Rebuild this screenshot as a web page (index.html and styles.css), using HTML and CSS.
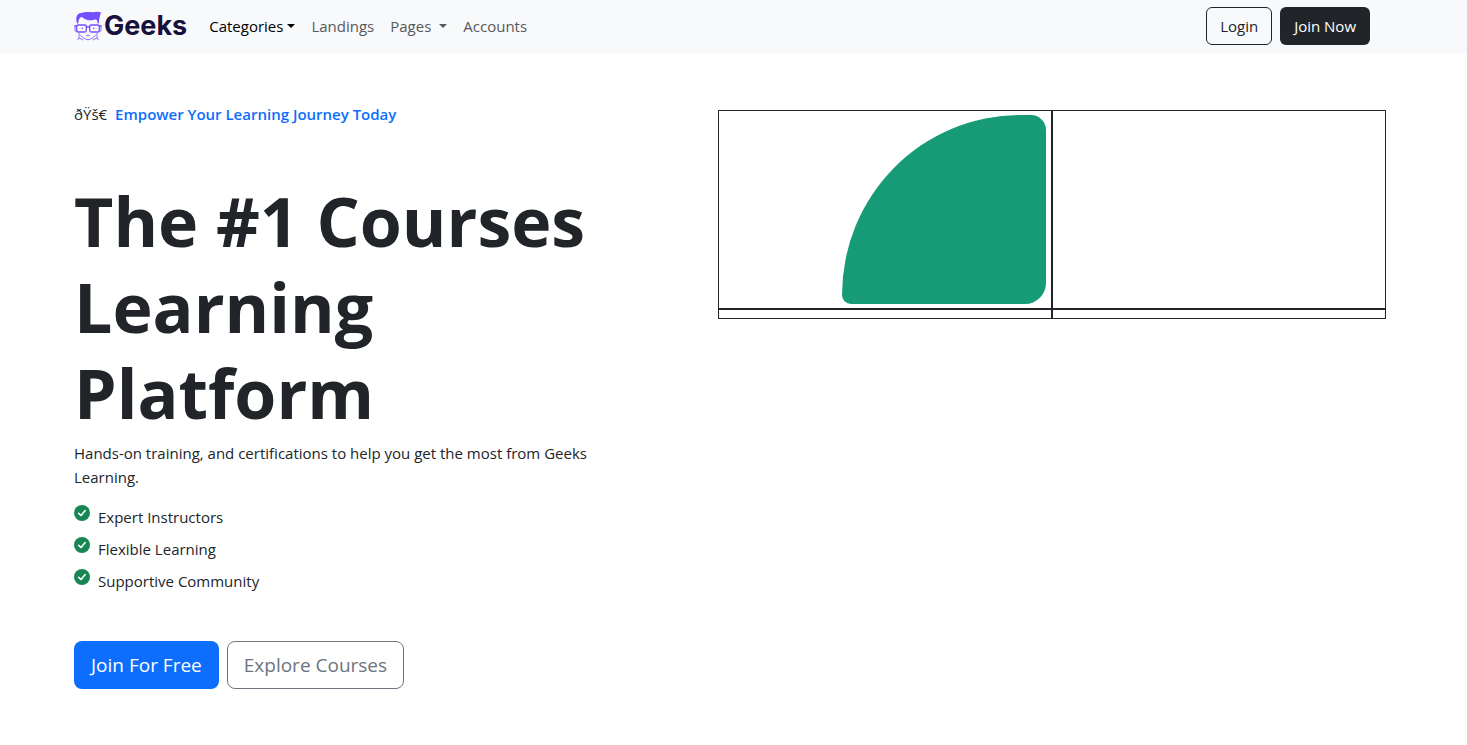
FILE: index.html
```html
<!DOCTYPE html>
<html lang="en">
<head>
<meta charset="utf-8">
<meta name="viewport" content="width=device-width, initial-scale=1">
<title>Geeks</title>
<link rel="stylesheet" href="styles.css">
</head>
<body>
<header class="navbar">
  <div class="navbar-inner">
    <a class="brand" href="#">
      <svg class="brand-mark" viewBox="0 0 28 30" aria-hidden="true">
        <path class="hair" d="M3 12.500C1.800 8 2 4.500 5 2.600C9 .6 15 .6 19 1.300C22 .4 25 .6 27.200 1.500C26.300 2.300 26.500 3.500 26 5C25.500 7 25 8 24.800 12.500L23.600 12.500C23.500 10.500 23.200 9 22 8.200C17.500 10.300 11.500 9.500 8 6C6.300 6 4.500 8 4.300 12.500Z"/>
        <path class="line" d="M1 14.500V19Q1.200 21 3.500 21M27 14.500V19Q26.700 21 24.500 21M4.500 22Q8 27.500 14 28.800Q20 27.500 23.500 22M12 24.500Q14 25.300 16 24.500M5 24V27L3.500 29M23 24V27L24.500 29M5 27L9 29M23 27L19 29"/>
        <rect class="glass" x="2.700" y="14" width="9.600" height="7" rx="1.500"/>
        <rect class="glass" x="15.700" y="14" width="9.600" height="7" rx="1.500"/>
        <path class="glass" d="M12.500 16H15.500M.5 15H2.700M25.300 15H27.500"/>
        <circle class="hair" cx="8.300" cy="17.300" r=".8"/><circle class="hair" cx="19.700" cy="17.300" r=".8"/>
      </svg>
      <span class="brand-name">Geeks</span>
    </a>
    <nav class="menu" aria-label="Main">
      <a class="menu-link active" href="#">Categories<span class="caret"></span></a>
      <a class="menu-link" href="#">Landings</a>
      <a class="menu-link spaced" href="#">Pages<span class="caret"></span></a>
      <a class="menu-link" href="#">Accounts</a>
    </nav>
    <div class="account">
      <button class="btn btn-outline-dark" type="button">Login</button>
      <button class="btn btn-dark" type="button">Join Now</button>
    </div>
  </div>
</header>
<main class="hero">
  <section class="intro">
    <p class="tagline"><span>ðŸš€</span><strong>Empower Your Learning Journey Today</strong></p>
    <h1 class="title">The #1 Courses Learning Platform</h1>
    <p class="lead">Hands-on training, and certifications to help you get the most from Geeks Learning.</p>
    <ul class="features">
      <li class="feature"><svg class="check" viewBox="0 0 16 16" aria-hidden="true"><circle cx="8" cy="8" r="8"/><path d="M4.700 8.300L7 10.500L11.200 5.600"/></svg><span>Expert Instructors</span></li>
      <li class="feature"><svg class="check" viewBox="0 0 16 16" aria-hidden="true"><circle cx="8" cy="8" r="8"/><path d="M4.700 8.300L7 10.500L11.200 5.600"/></svg><span>Flexible Learning</span></li>
      <li class="feature"><svg class="check" viewBox="0 0 16 16" aria-hidden="true"><circle cx="8" cy="8" r="8"/><path d="M4.700 8.300L7 10.500L11.200 5.600"/></svg><span>Supportive Community</span></li>
    </ul>
    <div class="actions">
      <button class="btn btn-lg btn-primary" type="button">Join For Free</button>
      <button class="btn btn-lg btn-outline-secondary" type="button">Explore Courses</button>
    </div>
  </section>
  <section class="gallery" aria-label="Gallery">
    <div class="cell">
      <svg class="shape" viewBox="0 0 204 189" aria-hidden="true"><path d="M0 180A9 9 0 0 0 9 189H183A21 21 0 0 0 204 168V15A15 15 0 0 0 189 0H178A178 180 0 0 0 0 180Z"/></svg>
    </div>
    <div class="cell"></div>
    <div class="cell"></div>
    <div class="cell"></div>
  </section>
</main>
</body>
</html>
```
FILE: styles.css
```css
* {
  box-sizing: border-box;
}

body {
  margin: 0;
  background: #fff;
  color: #212529;
  font-family: "Open Sans", "Noto Sans", sans-serif;
  font-size: 15px;
  line-height: 24px;
}

.navbar {
  background: #f8f9fb;
}

.navbar-inner {
  display: flex;
  align-items: center;
  max-width: 1467px;
  min-height: 54px;
  margin: 0 auto;
  padding: 7px 97px 9px 74px;
}

.brand {
  display: flex;
  align-items: center;
  gap: 2px;
  margin-right: 22px;
  text-decoration: none;
}

.brand-mark {
  width: 28px;
  height: 30px;
}

.hair {
  fill: #754ffe;
}

.line,
.glass {
  fill: none;
  stroke: #8d70fd;
  stroke-width: 1;
}

.glass {
  stroke: #754ffe;
  stroke-width: 1.3;
}

.brand-name {
  color: #18113c;
  font-family: Inter, sans-serif;
  font-size: 27px;
  font-weight: 700;
}

.menu {
  display: flex;
  gap: 16px;
}

.menu-link {
  display: flex;
  align-items: center;
  gap: 4px;
  color: #56585a;
  text-decoration: none;
}

.menu-link.active {
  color: #000;
}

.menu-link.spaced {
  gap: 8px;
}

.caret {
  border: 4px solid transparent;
  border-top-color: currentColor;
  border-bottom: 0;
}

.account {
  display: flex;
  gap: 8px;
  margin-left: auto;
}

.btn {
  padding: 6px 13px;
  border: 1px solid transparent;
  border-radius: 6px;
  background: transparent;
  font: inherit;
  white-space: nowrap;
}

.btn-outline-dark {
  border-color: #212529;
  color: #212529;
}

.btn-dark {
  background: #212529;
  color: #fff;
}

.btn-lg {
  padding: 8px 16px;
  border-radius: 8px;
  font-size: 19px;
  line-height: 30px;
}

.btn-primary {
  background: #0d6efd;
  color: #fff;
}

.btn-outline-secondary {
  border-color: #6c757d;
  color: #6c757d;
}

.hero {
  display: grid;
  grid-template-columns: 134fr 167fr;
  align-items: start;
  gap: 108px;
  max-width: 1467px;
  margin: 0 auto;
  padding: 48px 81px 48px 74px;
}

.tagline {
  display: flex;
  gap: 8px;
  margin: 0 0 52px;
}

.tagline strong {
  color: #0d6efd;
  font-weight: 600;
}

.title {
  margin: 0 0 5px;
  font-size: 68px;
  font-weight: 700;
  line-height: 86px;
}

.lead {
  margin: 0 0 16px;
}

.features {
  display: grid;
  gap: 8px;
  margin: 0 0 48px;
  padding: 0;
  list-style: none;
}

.feature {
  display: flex;
  align-items: flex-start;
  gap: 8px;
}

.check {
  width: 16px;
  height: 16px;
}

.check circle {
  fill: #198754;
}

.check path {
  fill: none;
  stroke: #fff;
  stroke-width: 1.6;
  stroke-linecap: round;
  stroke-linejoin: round;
}

.actions {
  display: flex;
  gap: 8px;
}

.gallery {
  display: grid;
  grid-template-columns: 1fr 1fr;
  margin-top: 8px;
}

.cell {
  display: flex;
  justify-content: flex-end;
  padding: 4px 5px;
  border: 1px solid #212529;
}

.shape {
  width: 204px;
  height: 189px;
  fill: #169b76;
}
```
